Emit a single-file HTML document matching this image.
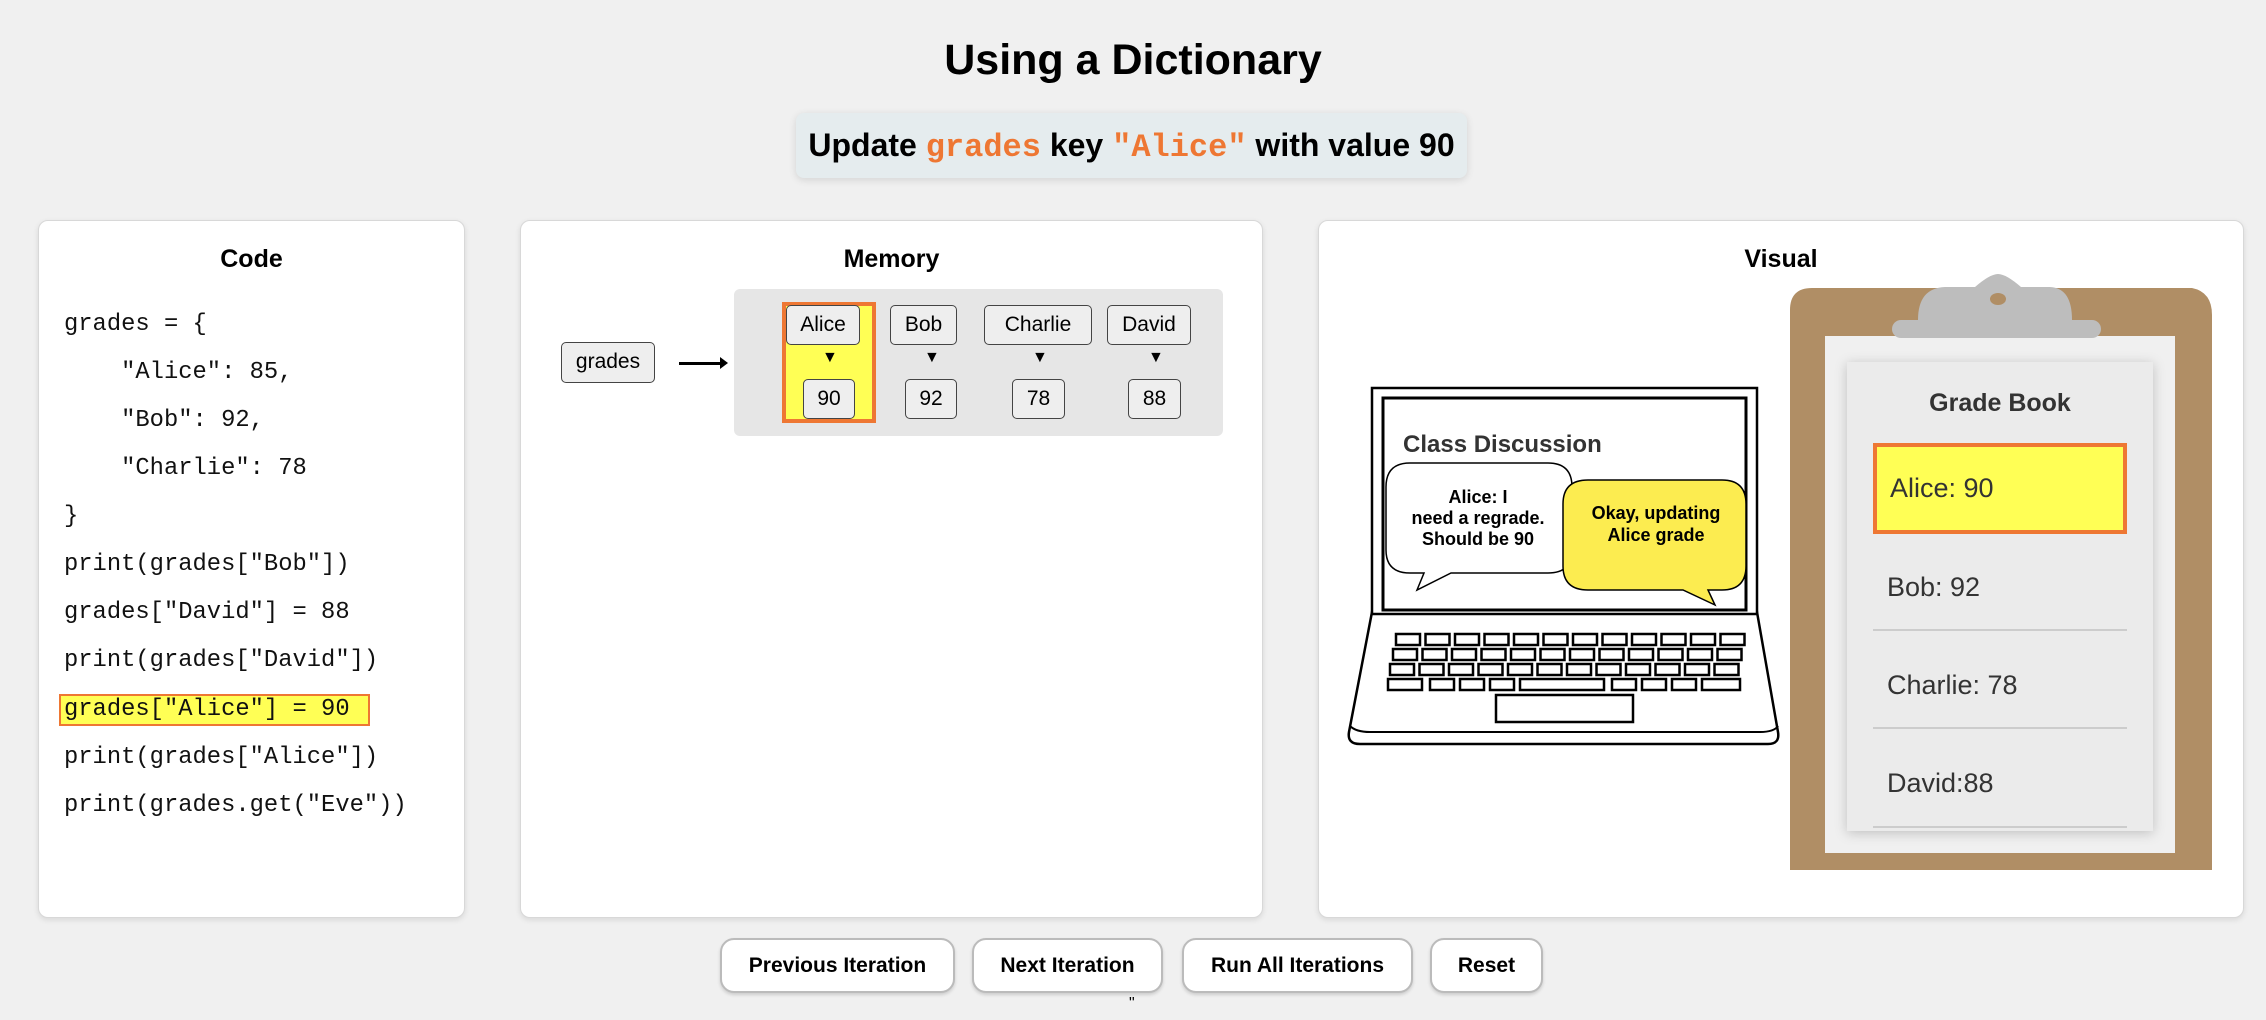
<!DOCTYPE html>
<html><head><meta charset="utf-8"><style>
*{box-sizing:border-box;margin:0;padding:0}
body{width:2266px;height:1020px;background:#f0f0f0;font-family:"Liberation Sans",sans-serif;position:relative;overflow:hidden}
.abs{position:absolute}
h1{position:absolute;left:0;width:2266px;top:36px;text-align:center;font-size:43px;font-weight:bold;color:#000}
.sub{left:796px;top:113px;width:671px;height:65px;background:#e5ecee;border-radius:8px;box-shadow:0 2px 8px rgba(0,0,0,.12);font-size:32px;font-weight:bold;text-align:center;line-height:65px}
.or{color:#ee7733;font-family:"Liberation Mono",monospace;font-weight:bold}
.panel{background:#fff;border:1px solid #d8d8d8;border-radius:10px;box-shadow:0 2px 6px rgba(0,0,0,.1);top:220px;height:698px}
.code{font-family:"Liberation Mono",monospace;font-size:23.8px;left:64px;color:#111;white-space:pre}
.box{background:#eee;border:1.5px solid #444;border-radius:5px;text-align:center;font-size:21px;color:#000}
.tri{font-size:16px}
.btn{top:938px;height:55px;background:#fff;border:2px solid #bbb;border-radius:14px;font-size:21px;font-weight:bold;text-align:center;line-height:51px;box-shadow:0 2px 3px rgba(0,0,0,.15)}
</style></head><body>
<h1>Using a Dictionary</h1>
<div class="abs sub">Update <span class="or">grades</span> key <span class="or">"Alice"</span> with value 90</div>

<div class="abs panel" style="left:38px;width:427px"></div>
<div class="abs panel" style="left:520px;width:743px"></div>
<div class="abs panel" style="left:1318px;width:926px"></div>
<div class="abs" style="left:38px;width:427px;top:245px;text-align:center;font-size:25px;font-weight:bold">Code</div>
<div class="abs" style="left:520px;width:743px;top:245px;text-align:center;font-size:25px;font-weight:bold">Memory</div>
<div class="abs" style="left:1318px;width:926px;top:245px;text-align:center;font-size:25px;font-weight:bold">Visual</div>

<div class="abs" style="left:59px;top:694px;width:311px;height:32px;background:#ffff55;border:2px solid #ee7733"></div>
<div class="abs code" style="top:311px">grades = {</div>
<div class="abs code" style="top:359px">    "Alice": 85,</div>
<div class="abs code" style="top:407px">    "Bob": 92,</div>
<div class="abs code" style="top:455px">    "Charlie": 78</div>
<div class="abs code" style="top:503px">}</div>
<div class="abs code" style="top:551px">print(grades["Bob"])</div>
<div class="abs code" style="top:599px">grades["David"] = 88</div>
<div class="abs code" style="top:647px">print(grades["David"])</div>
<div class="abs code" style="top:696px">grades["Alice"] = 90</div>
<div class="abs code" style="top:744px">print(grades["Alice"])</div>
<div class="abs code" style="top:792px">print(grades.get("Eve"))</div>

<!-- memory -->
<div class="abs box" style="left:561px;top:342px;width:94px;height:41px;line-height:38px">grades</div>
<div class="abs" style="left:679px;top:362px;width:44px;height:3px;background:#000"></div>
<div class="abs" style="left:720px;top:357px;width:0;height:0;border-left:8px solid #000;border-top:6px solid transparent;border-bottom:6px solid transparent"></div>
<div class="abs" style="left:734px;top:289px;width:489px;height:147px;background:#e6e6e6;border-radius:6px"></div>
<div class="abs" style="left:782px;top:302px;width:94px;height:121px;background:#ffff55;border:4px solid #ee7733"></div>
<div class="abs box" style="left:786px;top:305px;width:74px;height:40px;line-height:37px">Alice</div>
<div class="abs box" style="left:890px;top:305px;width:67px;height:40px;line-height:37px">Bob</div>
<div class="abs box" style="left:984px;top:305px;width:108px;height:40px;line-height:37px">Charlie</div>
<div class="abs box" style="left:1107px;top:305px;width:84px;height:40px;line-height:37px">David</div>
<div class="abs tri" style="left:822px;top:349px">▼</div>
<div class="abs tri" style="left:924px;top:349px">▼</div>
<div class="abs tri" style="left:1032px;top:349px">▼</div>
<div class="abs tri" style="left:1148px;top:349px">▼</div>
<div class="abs box" style="left:803px;top:379px;width:52px;height:40px;line-height:37px">90</div>
<div class="abs box" style="left:905px;top:379px;width:52px;height:40px;line-height:37px">92</div>
<div class="abs box" style="left:1012px;top:379px;width:53px;height:40px;line-height:37px">78</div>
<div class="abs box" style="left:1128px;top:379px;width:53px;height:40px;line-height:37px">88</div>

<svg class="abs" style="left:0;top:0" width="2266" height="1020" viewBox="0 0 2266 1020">
<defs>
<g id="row" fill="#fff" stroke="#000" stroke-width="2.5">
<rect x="0" y="0" width="24" height="11"/><rect x="29.5" y="0" width="24" height="11"/><rect x="59" y="0" width="24" height="11"/><rect x="88.5" y="0" width="24" height="11"/><rect x="118" y="0" width="24" height="11"/><rect x="147.5" y="0" width="24" height="11"/><rect x="177" y="0" width="24" height="11"/><rect x="206.5" y="0" width="24" height="11"/><rect x="236" y="0" width="24" height="11"/><rect x="265.5" y="0" width="24" height="11"/><rect x="295" y="0" width="24" height="11"/><rect x="324.5" y="0" width="24" height="11"/>
</g>
</defs>
<path d="M1372 612 L1757 612 L1778 732 Q1780 744 1768 744 L1360 744 Q1347 744 1349 732 Z" fill="#fff" stroke="#000" stroke-width="2.5"/>
<path d="M1350 726 Q1356 732 1370 732 L1760 732 Q1774 732 1778 726" fill="none" stroke="#000" stroke-width="2"/>
<rect x="1372" y="388" width="385" height="226" fill="#fff" stroke="#000" stroke-width="2.5"/>
<rect x="1383" y="398" width="363" height="212" fill="#fff" stroke="#000" stroke-width="3"/>
<use href="#row" x="1396" y="634"/>
<use href="#row" x="1393" y="649"/>
<use href="#row" x="1390" y="664"/>
<g fill="#fff" stroke="#000" stroke-width="2.5">
<rect x="1388" y="679" width="34" height="11"/><rect x="1430" y="679" width="24" height="11"/><rect x="1460" y="679" width="24" height="11"/><rect x="1490" y="679" width="24" height="11"/><rect x="1520" y="679" width="84" height="11"/><rect x="1612" y="679" width="24" height="11"/><rect x="1642" y="679" width="24" height="11"/><rect x="1672" y="679" width="24" height="11"/><rect x="1702" y="679" width="38" height="11"/>
</g>
<rect x="1496" y="695" width="137" height="27" fill="#fff" stroke="#000" stroke-width="2.5"/>
<text x="1403" y="452" font-family="Liberation Sans" font-weight="bold" font-size="24" fill="#333">Class Discussion</text>
<path d="M1410 463 L1548 463 Q1572 463 1572 487 L1572 550 Q1572 573 1548 573 L1451 573 L1417 590 L1424 573 L1410 573 Q1386 573 1386 550 L1386 487 Q1386 463 1410 463 Z" fill="#fff" stroke="#000" stroke-width="1.5"/>
<text font-family="Liberation Sans" font-weight="bold" font-size="18" text-anchor="middle"><tspan x="1478" y="503">Alice: I</tspan><tspan x="1478" y="524">need a regrade.</tspan><tspan x="1478" y="545">Should be 90</tspan></text>
<path d="M1588 480 L1722 480 Q1746 480 1746 504 L1746 566 Q1746 590 1722 590 L1708 590 L1715 605 L1683 590 L1588 590 Q1563 590 1563 566 L1563 504 Q1563 480 1588 480 Z" fill="#fcec50" stroke="#000" stroke-width="1.5"/>
<text font-family="Liberation Sans" font-weight="bold" font-size="18" text-anchor="middle"><tspan x="1656" y="519">Okay, updating</tspan><tspan x="1656" y="541">Alice grade</tspan></text>
<path d="M1790 310 Q1790 288 1812 288 L2192 288 Q2212 292 2212 315 L2212 870 L1790 870 Z" fill="#b08e65"/>
<rect x="1825" y="336" width="350" height="517" fill="#f0f0f0"/>
<rect x="1847" y="362" width="306" height="469" fill="#ebebeb" style="filter:drop-shadow(0 2px 6px rgba(0,0,0,.2))"/>
<path d="M1918 320 Q1918 288 1945 287 L1975 287 Q1990 274 1998 274 Q2006 274 2021 287 L2050 287 Q2072 288 2072 320 Z" fill="#bdbdbd"/>
<rect x="1892" y="320" width="209" height="18" rx="9" fill="#bdbdbd"/>
<ellipse cx="1998" cy="299" rx="8" ry="6" fill="#b08e65"/>
<text x="2000" y="411" text-anchor="middle" font-family="Liberation Sans" font-weight="bold" font-size="25" fill="#333">Grade Book</text>
<rect x="1875" y="445" width="250" height="87" fill="#ffff55" stroke="#ee7733" stroke-width="4"/>
<text x="1890" y="497" font-family="Liberation Sans" font-size="27" fill="#333">Alice: 90</text>
<text x="1887" y="596" font-family="Liberation Sans" font-size="27" fill="#333">Bob: 92</text>
<rect x="1873" y="629" width="254" height="2" fill="#ccc"/>
<text x="1887" y="694" font-family="Liberation Sans" font-size="27" fill="#333">Charlie: 78</text>
<rect x="1873" y="727" width="254" height="2" fill="#ccc"/>
<text x="1887" y="792" font-family="Liberation Sans" font-size="27" fill="#333">David:88</text>
<rect x="1873" y="826" width="254" height="2" fill="#ccc"/>
</svg>

<div class="abs btn" style="left:720px;width:235px">Previous Iteration</div>
<div class="abs btn" style="left:972px;width:191px">Next Iteration</div>
<div class="abs btn" style="left:1182px;width:231px">Run All Iterations</div>
<div class="abs btn" style="left:1430px;width:113px">Reset</div>
<div class="abs" style="left:1129px;top:995px;font-size:16px">"</div>
</body></html>
